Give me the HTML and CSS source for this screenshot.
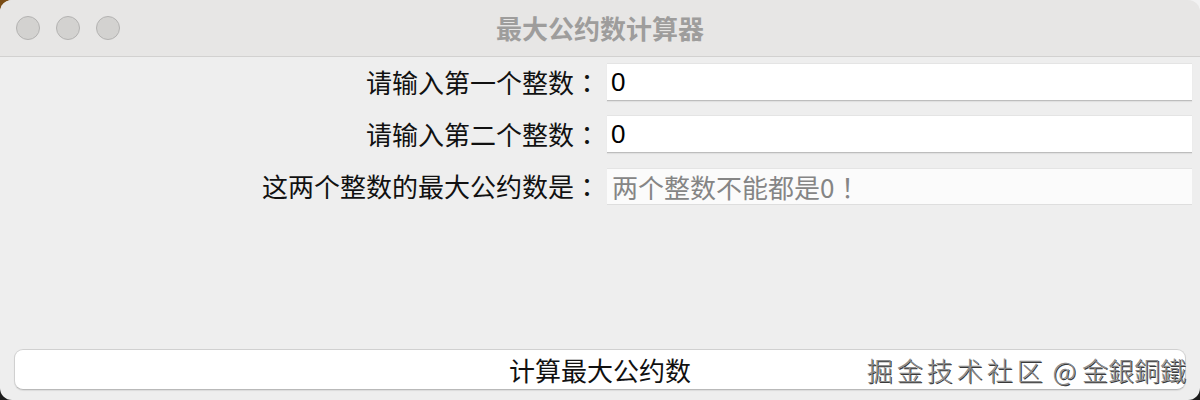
FILE: index.html
```html
<!DOCTYPE html>
<html lang="zh-CN">
<head>
<meta charset="utf-8">
<title>最大公约数计算器</title>
<link rel="stylesheet" href="styles.css">
</head>
<body>
<div class="window">
  <header class="titlebar">
    <div class="lights">
      <span class="light"></span>
      <span class="light"></span>
      <span class="light"></span>
    </div>
    <h1 class="title">最大公约数计算器</h1>
  </header>
  <main class="content">
    <form class="form">
      <label class="label" for="a">请输入第一个整数<span class="colon">：</span></label>
      <input class="field" id="a" type="text" value="0">
      <label class="label" for="b">请输入第二个整数<span class="colon">：</span></label>
      <input class="field" id="b" type="text" value="0">
      <label class="label" for="r">这两个整数的最大公约数是<span class="colon">：</span></label>
      <div class="field result" id="r">两个整数不能都是0<span class="colon">！</span></div>
    </form>
    <div class="actions">
      <button class="button" type="button">计算最大公约数</button>
      <span class="watermark"><span class="site">掘金技术社区</span> @ 金銀銅鐵</span>
    </div>
  </main>
</div>
</body>
</html>
```
FILE: styles.css
```css
* {
  box-sizing: border-box;
}

html, body {
  margin: 0;
  height: 100%;
}

body {
  background:
    linear-gradient(to right, #7a4c14 50%, #f2f2f2 50%) top / 100% 50% no-repeat,
    #1c1c1c;
  font-family: "Liberation Sans", "Noto Sans CJK SC", sans-serif;
}

.window {
  height: 400px;
  border-radius: 12px;
  overflow: hidden;
  background: #eeeeee;
  display: flex;
  flex-direction: column;
}

.titlebar {
  height: 57px;
  flex: none;
  background: #e7e6e5;
  border-bottom: 1px solid #d2d1d0;
  display: flex;
  align-items: center;
  position: relative;
}

.lights {
  display: flex;
  gap: 16px;
  padding-left: 16px;
  padding-bottom: 1px;
}

.light {
  width: 24px;
  height: 24px;
  border-radius: 50%;
  background: #d3d2d0;
  border: 1px solid #b4b3b2;
}

.title {
  position: absolute;
  left: 0;
  right: 0;
  top: 0;
  bottom: 1px;
  margin: 0;
  display: flex;
  align-items: center;
  justify-content: center;
  font-family: "Noto Sans CJK SC", sans-serif;
  font-size: 26px;
  font-weight: 700;
  color: #9e9d9c;
}

.content {
  flex: 1;
  display: flex;
  flex-direction: column;
  padding: 6px 8px 10px 14px;
}

.form {
  display: grid;
  grid-template-columns: 586px 1fr;
  grid-auto-rows: 38px;
  column-gap: 7px;
  row-gap: 14px;
  align-items: center;
  font-size: 26px;
}

.label {
  text-align: right;
  color: #111;
  font-family: "Noto Sans CJK SC", sans-serif;
  font-size: 26px;
  line-height: 38px;
  white-space: nowrap;
}

/* full-width punctuation sits centred in its em box */
.colon {
  display: inline-block;
  width: 1em;
  text-align: center;
  font-family: "Noto Sans CJK TC", sans-serif;
}

.field {
  height: 38px;
  border: none;
  border-top: 1px solid #e4e4e4;
  border-bottom: 1px solid #bdbdbd;
  background: #ffffff;
  padding: 0 4px;
  font-family: "Liberation Sans", "Noto Sans CJK SC", sans-serif;
  font-size: 26px;
  color: #000;
  outline: none;
  box-shadow: 0 1px 1px rgba(0, 0, 0, 0.06);
}

.result {
  height: 37px;
  display: flex;
  align-items: center;
  background: #fbfbfb;
  border-bottom-color: #dedede;
  box-shadow: none;
  color: #858585;
  font-family: "Noto Sans CJK SC", sans-serif;
  font-size: 26px;
  padding-left: 5px;
  white-space: nowrap;
}

.actions {
  margin-top: auto;
  margin-right: 6px;
  position: relative;
}

.button {
  display: block;
  width: 100%;
  height: 41px;
  border: 1px solid #d0d0d0;
  border-bottom-color: #b9b9b9;
  border-radius: 9px;
  background: #ffffff;
  font-family: "Noto Sans CJK SC", sans-serif;
  font-size: 26px;
  color: #111;
  padding: 0;
  box-shadow: 0 1px 1px rgba(0, 0, 0, 0.08);
}

.watermark {
  position: absolute;
  right: 0;
  top: 0;
  height: 41px;
  display: flex;
  align-items: center;
  font-family: "Noto Sans CJK TC", sans-serif;
  font-size: 26px;
  font-weight: 300;
  color: #8c8c8c;
  text-shadow: 1px 1px 0 #3a3a3a, -1px -1px 0 #ffffff;
  white-space: pre;
}

.site {
  letter-spacing: 4px;
}
```
